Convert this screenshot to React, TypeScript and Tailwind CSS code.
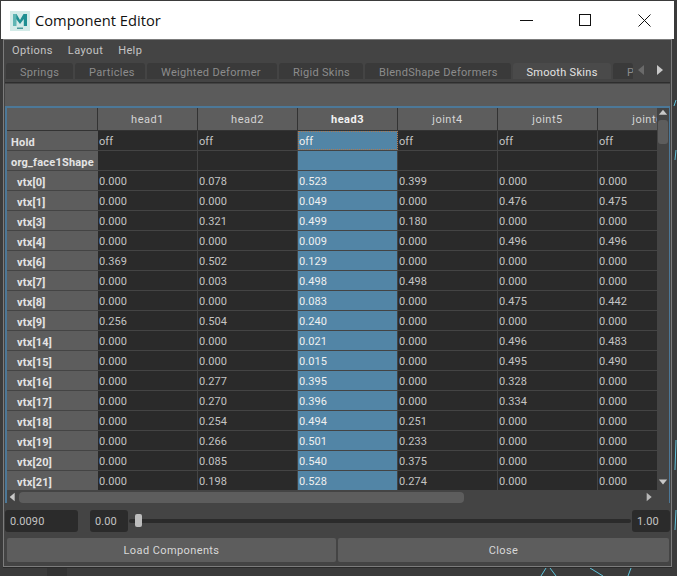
import React from "react";

const Z = "0.000";
const rows: [string, string[]][] = [
  ["vtx[0]", [Z, "0.078", "0.523", "0.399", Z, Z]],
  ["vtx[1]", [Z, Z, "0.049", Z, "0.476", "0.475"]],
  ["vtx[3]", [Z, "0.321", "0.499", "0.180", Z, Z]],
  ["vtx[4]", [Z, Z, "0.009", Z, "0.496", "0.496"]],
  ["vtx[6]", ["0.369", "0.502", "0.129", Z, Z, Z]],
  ["vtx[7]", [Z, "0.003", "0.498", "0.498", Z, Z]],
  ["vtx[8]", [Z, Z, "0.083", Z, "0.475", "0.442"]],
  ["vtx[9]", ["0.256", "0.504", "0.240", Z, Z, Z]],
  ["vtx[14]", [Z, Z, "0.021", Z, "0.496", "0.483"]],
  ["vtx[15]", [Z, Z, "0.015", Z, "0.495", "0.490"]],
  ["vtx[16]", [Z, "0.277", "0.395", Z, "0.328", Z]],
  ["vtx[17]", [Z, "0.270", "0.396", Z, "0.334", Z]],
  ["vtx[18]", [Z, "0.254", "0.494", "0.251", Z, Z]],
  ["vtx[19]", [Z, "0.266", "0.501", "0.233", Z, Z]],
  ["vtx[20]", [Z, "0.085", "0.540", "0.375", Z, Z]],
  ["vtx[21]", [Z, "0.198", "0.528", "0.274", Z, Z]],
];
const heads = ["head1", "head2", "head3", "joint4", "joint5", "joint6"];
const tabs: [string, number][] = [
  ["Springs", 67],
  ["Particles", 70],
  ["Weighted Deformer", 130],
  ["Rigid Skins", 84],
  ["BlendShape Deformers", 146],
  ["Smooth Skins", 98],
  ["Paint", 20],
];

const font = "font-['Roboto',sans-serif]";

function Cell({ i, text, focus }: { i: number; text: string; focus?: boolean }) {
  const sel = i === 2;
  return (
    <div
      className={`w-[100px] h-full shrink-0 border-r border-[#444444] pl-[1px] text-[11px] leading-[21px] tracking-[0.1px] overflow-hidden ${
        sel ? "bg-[#5285a6] text-[#f0f0f0]" : "bg-[#2a2a2a] text-[#c4c4c4]"
      } ${focus ? "outline-1 -outline-offset-1 outline-dotted outline-[#b07a50]" : ""}`}
    >
      {text}
    </div>
  );
}

function Label({ text, indent }: { text: string; indent?: boolean }) {
  return (
    <div
      className={`w-[91px] h-full shrink-0 bg-[#5d5d5d] overflow-hidden text-[11px] font-bold leading-[24px] text-[#e4e4e4] tracking-[0.2px] whitespace-nowrap ${
        indent ? "pl-[10px]" : "pl-[4px]"
      }`}
    >
      {text}
    </div>
  );
}

function Row({ children }: { children: React.ReactNode }) {
  return <div className="flex h-5 border-b border-[#444444] w-max">{children}</div>;
}

function Field({ text, w }: { text: string; w: string }) {
  return (
    <div className={`${w} h-[22px] shrink-0 rounded-[3px] bg-[#2b2b2b] pl-[5px] text-[11px] leading-[24px] tracking-[0.1px] text-[#c4c4c4]`}>
      {text}
    </div>
  );
}

function Tri({ dir, c, className }: { dir: "l" | "r" | "u" | "d"; c: string; className?: string }) {
  const pts = {
    l: "8,1 8,11 2,6",
    r: "2,1 2,11 8,6",
    u: "1,8 11,8 6,2",
    d: "1,3 11,3 6,9",
  }[dir];
  return (
    <svg width="10" height="12" viewBox="0 0 12 12" className={className}>
      <polygon points={pts} fill={c} />
    </svg>
  );
}

export default function App() {
  return (
    <div className={`relative w-[677px] h-[576px] overflow-hidden bg-[#3b3b3b] ${font}`}>
      {/* viewport behind the window */}
      <svg className="absolute inset-0" width="677" height="576" fill="none" stroke="#5fc4dc" strokeWidth="1">
        <path d="M541 576 L546 568 M550 568 L556 576 M590 568 L603 576 M631 568 L628 576 M676 100 L674 106 M676 150 L675 160 M676 440 L675 470 M676 510 L675 530" />
        <rect x="47" y="567" width="20" height="9" fill="#333333" stroke="none" />
      </svg>

      <div className="relative flex h-full flex-col pt-[1px]">
        {/* title bar */}
        <div className="flex h-[38px] w-[673px] ml-[1px] shrink-0 items-center bg-white">
          <svg width="20" height="20" viewBox="0 0 20 20" className="ml-[9px] mt-[1px]">
            <rect width="20" height="20" fill="#d3ebe8" />
            <path d="M3 15 L3 3 L6.5 3 L10 9 L13.5 3 L17 3 L17 15 L13.8 15 L13.8 8 L10 13 L6.2 8 L6.2 15 Z" fill="#1f8f92" />
            <path d="M3 3 L6.5 3 L6.2 15 L3 15 Z" fill="#5fb6b4" />
            <rect x="7" y="16.5" width="6" height="1.5" fill="#4a9a9c" />
          </svg>
          <span className="ml-[5px] font-['Open_Sans',sans-serif] text-[14.7px] text-[#111111]">Component Editor</span>
          <div className="ml-auto flex items-center">
            <svg width="13" height="13" viewBox="0 0 13 13" className="mr-[46px]" stroke="#111" fill="none">
              <path d="M0 6.5 H13" />
            </svg>
            <svg width="12" height="12" viewBox="0 0 12 12" className="mr-[47px]" stroke="#111" fill="none">
              <rect x="0.5" y="0.5" width="11" height="11" />
            </svg>
            <svg width="13" height="13" viewBox="0 0 13 13" className="mr-[23px]" stroke="#111" fill="none">
              <path d="M0.5 0.5 L12.5 12.5 M12.5 0.5 L0.5 12.5" />
            </svg>
          </div>
        </div>

        {/* dialog */}
        <div className="ml-[3px] flex h-[528px] w-[669px] flex-col border border-[#7c7c7c] bg-[#444444] shadow-[0_1px_0_#2a2a2a]">
          {/* menu */}
          <div className="flex h-5 shrink-0 items-center gap-[15px] pl-[8px] pt-[2px] text-[11px] tracking-[0.4px] text-[#c4c4c4]">
            <span>Options</span>
            <span>Layout</span>
            <span>Help</span>
          </div>

          {/* tabs */}
          <div className="ml-[1px] mr-[1px] mt-[3px] flex h-[20px] shrink-0 border-b border-[#2e2e2e] pl-[1px]">
            <div className="flex h-[16px] w-[627px] gap-[2px] overflow-hidden">
              {tabs.map(([t, w]) => {
                const on = t === "Smooth Skins";
                return (
                  <div
                    key={t}
                    style={{ width: w }}
                    className={`h-full shrink-0 overflow-hidden rounded-t-[3px] text-[11px] leading-[20px] tracking-[0.3px] whitespace-nowrap ${
                      on ? "bg-[#4a4a4a] text-[#e4e4e4] text-center" : "bg-[#3a3a3a] pl-[14px] text-[#8c8c8c]"
                    }`}
                  >
                    {t}
                  </div>
                );
              })}
            </div>
            <div className="flex h-[14px] items-center gap-[7px] pl-[2px]">
              <svg width="12" height="12" viewBox="0 0 12 12">
                <polygon points="9,1 9,11 3,6" fill="#6a6a6a" />
              </svg>
              <svg width="12" height="12" viewBox="0 0 12 12">
                <polygon points="3,1 3,11 9,6" fill="#c8c8c8" />
              </svg>
            </div>
          </div>

          {/* band */}
          <div className="mx-[1px] mt-[1px] h-[22px] shrink-0 bg-[#5b5b5b]" />

          {/* table pane */}
          <div className="ml-[1px] flex h-[397px] w-[665px] shrink-0 flex-col border-2 border-[#4c7898] border-r-[1px] border-b-[1px] bg-[#444444]">
            <div className="flex h-[383px] shrink-0">
              <div className="w-[650px] overflow-hidden">
                <div className="flex h-[23px] w-max border-b border-[#333333]">
                  <div className="h-full w-[91px] shrink-0 border-r border-[#333333] bg-[#5d5d5d]" />
                  {heads.map((h, i) => (
                    <div
                      key={h}
                      className={`h-full w-[100px] shrink-0 border-r border-[#333333] bg-[#5d5d5d] text-center text-[11px] leading-[23px] tracking-[0.5px] ${
                        i === 2 ? "font-bold text-[#f2f2f2]" : "text-[#d4d4d4]"
                      }`}
                    >
                      {h}
                    </div>
                  ))}
                </div>
                <Row>
                  <Label text="Hold" />
                  {heads.map((h, i) => (
                    <Cell key={h} i={i} text="off" focus={i === 2} />
                  ))}
                </Row>
                <Row>
                  <Label text="org_face1Shape" />
                  {heads.map((h, i) => (
                    <Cell key={h} i={i} text="" />
                  ))}
                </Row>
                {rows.map(([n, vals]) => (
                  <Row key={n}>
                    <Label text={n} indent />
                    {vals.map((v, i) => (
                      <Cell key={i} i={i} text={v} />
                    ))}
                  </Row>
                ))}
              </div>
              {/* vertical scrollbar */}
              <div className="flex flex-1 flex-col items-center bg-[#444444]">
                <Tri dir="u" c="#c8c8c8" className="mt-[-1px]" />
                <div className="mt-[1px] h-[24px] w-[10px] rounded-[3px] bg-[#5d5d5d]" />
                <Tri dir="d" c="#c8c8c8" className="mt-auto mb-[3px]" />
              </div>
            </div>
            {/* horizontal scrollbar */}
            <div className="flex h-[12px] items-center bg-[#444444]">
              <Tri dir="l" c="#c8c8c8" className="ml-[1px] shrink-0" />
              <div className="ml-[1px] h-[11px] w-[445px] rounded-[4px] bg-[#5d5d5d]" />
              <Tri dir="r" c="#b8b8b8" className="ml-[181px] shrink-0" />
            </div>
          </div>

          {/* slider row */}
          <div className="ml-[1px] mt-[7px] flex h-[22px] w-[665px] shrink-0 items-center">
            <Field text="0.0090" w="w-[73px]" />
            <div className="ml-[12px]">
              <Field text="0.00" w="w-[38px]" />
            </div>
            <div className="relative mx-[1px] h-[4px] flex-1 rounded-full bg-[#2b2b2b]">
              <div className="absolute left-[6px] top-[-5px] h-[13px] w-[7px] rounded-[2px] bg-[#bdbdbd]" />
            </div>
            <Field text="1.00" w="w-[38px]" />
          </div>

          {/* buttons */}
          <div className="ml-[3px] mt-[6px] flex h-[24px] w-[662px] shrink-0 gap-[2px]">
            <button className="h-full w-[329px] rounded-[2px] bg-[#5d5d5d] pt-[2px] text-[11px] tracking-[0.4px] text-[#d8d8d8]">
              Load Components
            </button>
            <button className="h-full w-[331px] rounded-[2px] bg-[#5d5d5d] pt-[2px] text-[11px] tracking-[0.4px] text-[#d8d8d8]">
              Close
            </button>
          </div>
        </div>
      </div>
    </div>
  );
}
